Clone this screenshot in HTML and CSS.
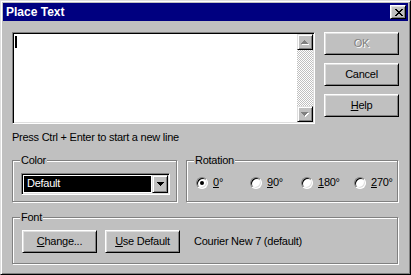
FILE: index.html
```html
<!DOCTYPE html>
<html lang="en">
<head>
    <meta charset="UTF-8">
    <meta name="viewport" content="width=device-width, initial-scale=1.0">
    <title>Place Text</title>
    <link rel="stylesheet" href="styles.css">
</head>
<body>
    <div class="window">
        <div class="titlebar">
            <span class="title">Place Text</span>
            <button class="close-btn" aria-label="Close">
                <svg width="8" height="7" viewBox="0 0 8 7" shape-rendering="crispEdges"><path d="M0 0h2v1H0z M6 0h2v1H6z M1 1h2v1H1z M5 1h2v1H5z M2 2h4v1H2z M3 3h2v1H3z M2 4h4v1H2z M1 5h2v1H1z M5 5h2v1H5z M0 6h2v1H0z M6 6h2v1H6z" fill="#000"/></svg>
            </button>
        </div>

        <div class="dialog">
            <div class="top-row">
                <div class="text-field">
                    <div class="text-area"><span class="caret"></span></div>
                    <div class="scrollbar">
                        <div class="scroll-btn">
                            <svg width="8" height="5" viewBox="0 0 8 5" shape-rendering="crispEdges"><path d="M4 1h1v1H4z M3 2h3v1H3z M2 3h5v1H2z M1 4h7v1H1z" fill="#fff"/><path d="M3 0h1v1H3z M2 1h3v1H2z M1 2h5v1H1z M0 3h7v1H0z" fill="#808080"/></svg>
                        </div>
                        <div class="scroll-track"></div>
                        <div class="scroll-btn">
                            <svg width="8" height="5" viewBox="0 0 8 5" shape-rendering="crispEdges"><path d="M1 1h7v1H1z M2 2h5v1H2z M3 3h3v1H3z M4 4h1v1H4z" fill="#fff"/><path d="M0 0h7v1H0z M1 1h5v1H1z M2 2h3v1H2z M3 3h1v1H3z" fill="#808080"/></svg>
                        </div>
                    </div>
                </div>
                <div class="side-buttons">
                    <button class="btn" disabled>OK</button>
                    <button class="btn">Cancel</button>
                    <button class="btn"><u>H</u>elp</button>
                </div>
            </div>

            <p class="hint">Press Ctrl + Enter to start a new line</p>

            <div class="group-row">
                <div class="group">
                    <div class="group-label">Color</div>
                    <div class="combo">
                        <div class="combo-value">Default</div>
                        <div class="combo-btn">
                            <svg width="7" height="4" viewBox="0 0 7 4" shape-rendering="crispEdges"><path d="M0 0h7v1H0z M1 1h5v1H1z M2 2h3v1H2z M3 3h1v1H3z" fill="#000"/></svg>
                        </div>
                    </div>
                </div>
                <div class="group">
                    <div class="group-label">Rotation</div>
                    <div class="radios">
                        <label class="radio checked"><span class="radio-box"></span><span><u>0</u>°</span></label>
                        <label class="radio"><span class="radio-box"></span><span><u>9</u>0°</span></label>
                        <label class="radio"><span class="radio-box"></span><span><u>1</u>80°</span></label>
                        <label class="radio"><span class="radio-box"></span><span><u>2</u>70°</span></label>
                    </div>
                </div>
            </div>

            <div class="group group-font">
                <div class="group-label">Font</div>
                <div class="font-row">
                    <button class="btn btn-font"><u>C</u>hange...</button>
                    <button class="btn btn-font"><u>U</u>se Default</button>
                    <span class="font-name">Courier New 7 (default)</span>
                </div>
            </div>
        </div>
    </div>
</body>
</html>
```

FILE: styles.css
```css
/* Basic styles */
body {
    margin: 0;
    background: #c0c0c0;
    font-family: "Liberation Sans", Arial, sans-serif;
    font-size: 11px;
    line-height: 13px;
    letter-spacing: -0.25px;
    color: #000;
}
u {
    text-underline-offset: 1px;
}

/* Window frame */
.window {
    box-sizing: border-box;
    width: 411px;
    height: 275px;
    padding: 2px;
    background: #c0c0c0;
    border: 1px solid;
    border-color: #dfdfdf #000 #000 #dfdfdf;
    box-shadow: inset 1px 1px #fff, inset -1px -1px #808080;
}
.titlebar {
    display: flex;
    align-items: center;
    justify-content: space-between;
    height: 18px;
    padding-left: 3px;
    background: #000080;
    color: #fff;
}
.title {
    font-size: 12px;
    font-weight: bold;
    line-height: 18px;
    letter-spacing: 0;
}
.close-btn {
    display: flex;
    align-items: center;
    justify-content: center;
    box-sizing: border-box;
    width: 16px;
    height: 14px;
    margin-right: 2px;
    padding: 0 0 0 1px;
    background: #c0c0c0;
    border: 1px solid;
    border-color: #fff #000 #000 #fff;
    box-shadow: inset 1px 1px #dfdfdf, inset -1px -1px #808080;
}

/* Dialog body */
.dialog {
    padding: 11px 9px 0;
}
.top-row {
    display: flex;
    gap: 9px;
}
.text-field {
    display: flex;
    box-sizing: border-box;
    width: 303px;
    height: 92px;
    padding: 1px;
    background: #fff;
    border: 1px solid;
    border-color: #808080 #fff #fff #808080;
    box-shadow: inset 1px 1px #000, inset -1px -1px #dfdfdf;
}
.text-area {
    flex: 1;
}
.caret {
    display: block;
    width: 2px;
    height: 12px;
    margin: 2px 0 0 1px;
    background: #000;
}
.scrollbar {
    display: flex;
    flex-direction: column;
    width: 16px;
}
.scroll-btn, .combo-btn {
    display: flex;
    align-items: center;
    justify-content: center;
    box-sizing: border-box;
    width: 16px;
    height: 16px;
    background: #c0c0c0;
    border: 1px solid;
    border-color: #dfdfdf #000 #000 #dfdfdf;
    box-shadow: inset 1px 1px #fff, inset -1px -1px #808080;
}
.scroll-track {
    flex: 1;
    background: repeating-conic-gradient(#c0c0c0 0 25%, #fff 0 50%) 0 0 / 2px 2px;
}
.side-buttons {
    display: flex;
    flex-direction: column;
    gap: 8px;
    width: 75px;
}
.btn {
    box-sizing: border-box;
    height: 23px;
    padding: 0;
    font: inherit;
    letter-spacing: inherit;
    color: #000;
    background: #c0c0c0;
    border: 1px solid;
    border-color: #fff #000 #000 #fff;
    box-shadow: inset 1px 1px #dfdfdf, inset -1px -1px #808080;
}
.btn:disabled {
    color: #808080;
    text-shadow: 1px 1px #fff;
}
.hint {
    margin: 7px 0 0;
}

/* Group boxes */
.group-row {
    display: grid;
    grid-template-columns: 165px 212px;
    column-gap: 9px;
    margin-top: 16px;
}
.group {
    padding: 0 7px 6px;
    border: 1px solid #808080;
    box-shadow: inset 1px 1px #fff, 1px 1px #fff;
}
.group-label {
    width: fit-content;
    margin-top: -7px;
    padding: 0 1px;
    background: #c0c0c0;
}
.group-font {
    width: 370px;
    margin-top: 15px;
    padding-bottom: 10px;
}

/* Color combo */
.combo {
    display: flex;
    box-sizing: border-box;
    width: 149px;
    height: 22px;
    margin: 6px 0 0 1px;
    padding: 1px;
    background: #fff;
    border: 1px solid;
    border-color: #808080 #fff #fff #808080;
    box-shadow: inset 1px 1px #000, inset -1px -1px #dfdfdf;
}
.combo-value {
    flex: 1;
    height: 16px;
    margin: 1px;
    padding-left: 3px;
    line-height: 15px;
    background: #000;
    color: #fff;
}
.combo-btn {
    height: 18px;
}

/* Rotation radios */
.radios {
    display: grid;
    grid-template-columns: 54px 51px 53px auto;
    margin: 9px 0 0 2px;
}
.radio {
    display: flex;
    align-items: center;
    gap: 5px;
}
.radio-box {
    display: flex;
    align-items: center;
    justify-content: center;
    box-sizing: border-box;
    width: 12px;
    height: 12px;
    border-radius: 50%;
    background: #fff;
    border: 1px solid;
    border-color: #808080 #fff #fff #808080;
    box-shadow: inset 1px 1px #000, inset -1px -1px #dfdfdf;
}
.radio.checked .radio-box::after {
    content: "";
    width: 4px;
    height: 4px;
    border-radius: 50%;
    background: #000;
}

/* Font row */
.font-row {
    display: flex;
    align-items: center;
    gap: 8px;
    margin: 6px 0 0 2px;
}
.btn-font {
    width: 75px;
}
.font-name {
    margin-left: 6px;
}
```
